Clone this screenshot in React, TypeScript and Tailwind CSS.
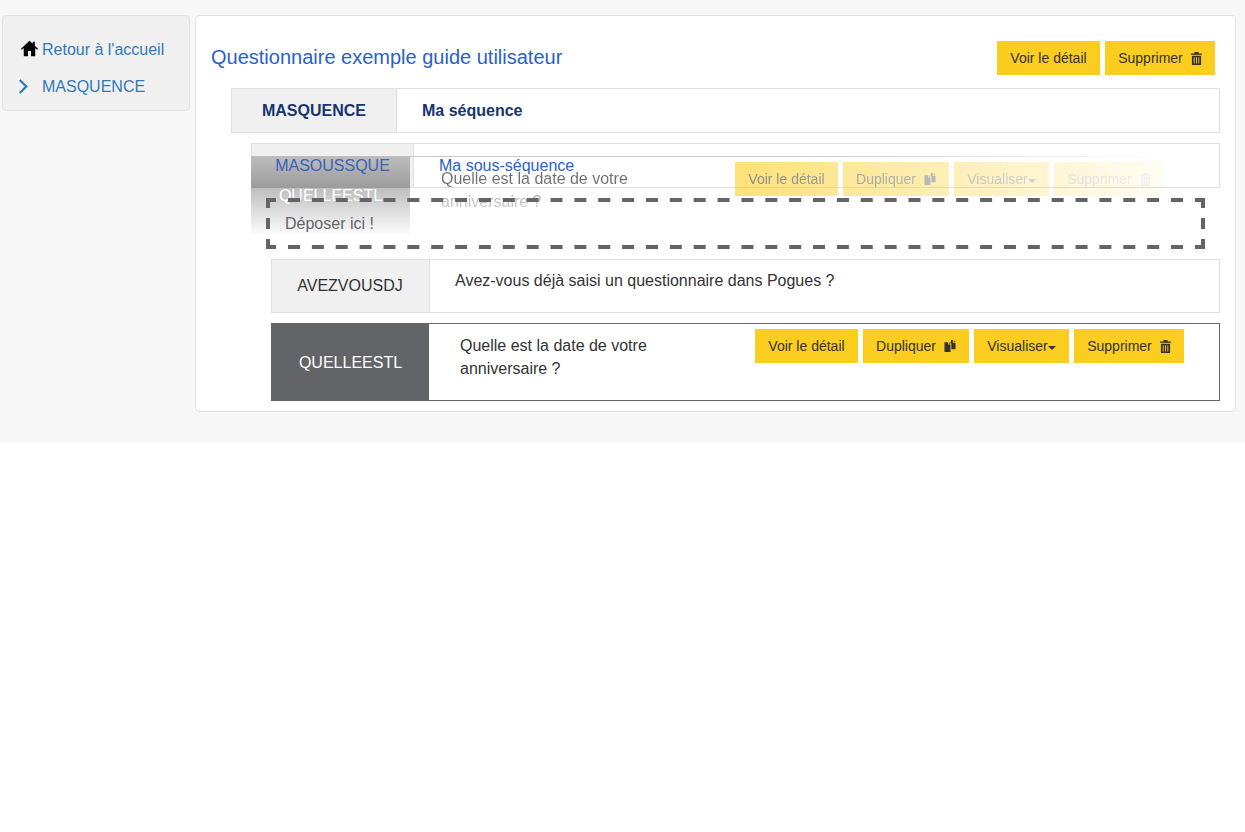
import type { ReactNode } from "react";

function HomeIcon() {
  return (
    <svg viewBox="0 0 16 16" className="h-[17px] w-[17px] shrink-0 fill-black" aria-hidden="true">
      <path d="M8 .6 0 8.300l.8.900L2.600 7.600V15.400h4V10.400h2.800v5h4V7.600l1.800 1.600.8-.9-3-2.800V1.600h-2v2L8 .6Z" />
    </svg>
  );
}

function ChevronIcon() {
  return (
    <svg viewBox="0 0 10 16" className="h-[15px] w-[10px] shrink-0 fill-none stroke-[#337ab7] stroke-[2.4]" aria-hidden="true">
      <path d="M1.500 1 8.500 8l-7 7" />
    </svg>
  );
}

function TrashIcon() {
  return (
    <svg viewBox="0 0 12 14" className="h-[13px] w-[11px] shrink-0 fill-current" aria-hidden="true">
      <path d="M4 0h4l.6 1.500H12V3H0V1.500h3.400L4 0ZM1 4h10v10H1V4Zm2 1.500v7h1v-7H3Zm2.500 0v7h1v-7h-1Zm2.500 0v7h1v-7H8Z" />
    </svg>
  );
}

function CopyIcon() {
  return (
    <svg viewBox="0 0 12 13" className="h-[12px] w-[12px] shrink-0 fill-current" aria-hidden="true">
      <path d="M0 2.500h4v2.500h2.500V13H0V2.500Zm5 0L6.500 4H5V2.500ZM7 0h2v3h3v7H7.500V4L6 2.500h1V0Zm3 .2L12 2h-2V.2Z" />
    </svg>
  );
}

function Caret() {
  return <span className="mt-[3px] h-0 w-0 border-x-4 border-t-4 border-x-transparent border-t-current" />;
}

function ActionButton({ width, children }: { width: string; children: ReactNode }) {
  return (
    <button
      type="button"
      className={`flex h-[34px] items-center justify-center whitespace-nowrap bg-[#fbcd1f] text-sm text-[#333] ${width}`}
    >
      {children}
    </button>
  );
}

function RowActions() {
  return (
    <div className="flex gap-[5px]">
      <ActionButton width="w-[103px]">Voir le détail</ActionButton>
      <ActionButton width="w-[106px]">
        Dupliquer
        <span className="ml-2">
          <CopyIcon />
        </span>
      </ActionButton>
      <ActionButton width="w-[95px]">
        Visualiser
        <Caret />
      </ActionButton>
      <ActionButton width="w-[110px]">
        Supprimer
        <span className="ml-2">
          <TrashIcon />
        </span>
      </ActionButton>
    </div>
  );
}

function SelectedRow() {
  return (
    <div className="flex h-[78px] border border-[#636468] bg-white">
      <div className="flex w-[157px] shrink-0 items-center justify-center bg-[#636468] pt-[2px] text-white">
        QUELLEESTL
      </div>
      <div className="flex flex-1">
        <p className="mt-[10px] ml-[31px] w-[240px] leading-[23px] text-[#333]">
          Quelle est la date de votre anniversaire ?
        </p>
        <div className="mt-[5px] ml-[55px]">
          <RowActions />
        </div>
      </div>
    </div>
  );
}

// what the browser shows while a row is dragged: same row, washed out
function DragPreview() {
  return (
    <div className="pointer-events-none absolute top-[13px] left-0 z-10 flex h-[78px] w-[949px]">
      <div className="flex w-[159px] shrink-0 items-center justify-center bg-[linear-gradient(to_bottom,#bdbdbd_0px,#9b9b9b_32px,#bebebe_32px,#fbfbfb_78px)] pt-[2px] text-white">
        QUELLEESTL
      </div>
      <div className="relative flex-1">
        <div className="h-px w-[755px] bg-[linear-gradient(to_right,#c8c8c8_50%,transparent)]" />
        <p className="mt-[10px] ml-[31px] w-[240px] bg-[linear-gradient(to_bottom,#6f6f6f_40%,#c4c4c4_75%)] bg-clip-text leading-[23px] text-transparent">
          Quelle est la date de votre anniversaire ?
        </p>
        <div className="absolute top-[6px] left-[325px] opacity-60 [mask-image:linear-gradient(to_right,black_0%,rgba(0,0,0,0.08)_100%)]">
          <RowActions />
        </div>
      </div>
    </div>
  );
}

function DropOutline() {
  return (
    <svg viewBox="0 0 939 51" className="pointer-events-none absolute inset-0 h-[51px] w-[939px]" aria-hidden="true">
      <path
        d="M0 0H10V4H4V10H0ZM939 0V10H935V4H929V0ZM0 51V41H4V47H10V51ZM939 51H929V47H935V41H939ZM0 20H4V31H0ZM935 20H939V31H935Z"
        fill="#636468"
      />
      <line x1="22" y1="2" x2="917" y2="2" stroke="#636468" strokeWidth="4" strokeDasharray="12 11.865" />
      <line x1="22" y1="49" x2="917" y2="49" stroke="#636468" strokeWidth="4" strokeDasharray="12 11.865" />
    </svg>
  );
}

export default function App() {
  return (
    <div className="font-['Liberation_Sans',Arial,sans-serif] text-base text-[#333]">
      <div className="flex h-[443px] items-start gap-[5px] bg-[#f7f7f7] pt-[15px] pl-[2px]">
        <aside className="h-[96px] w-[188px] rounded border border-[#e3e3e3] bg-[#f0f0f0] pt-[23px] pl-[15px] text-[#337ab7]">
          <div className="flex h-5 items-center gap-[4px] pl-[3px]">
            <span className="-mt-[2px]">
              <HomeIcon />
            </span>
            <span className="pt-px">Retour à l'accueil</span>
          </div>
          <div className="mt-[17px] flex h-5 items-center gap-[14px]">
            <ChevronIcon />
            <span className="pt-px">MASQUENCE</span>
          </div>
        </aside>

        <main className="h-[397px] w-[1041px] rounded border border-[#e3e3e3] bg-white pt-[25px] pr-[15px] pl-[14px]">
          <div className="mr-[5px] flex h-[34px] items-center justify-between">
            <h1 className="ml-px pb-[2px] text-xl text-[#2a61c8]">Questionnaire exemple guide utilisateur</h1>
            <div className="flex gap-[5px]">
              <ActionButton width="w-[103px]">Voir le détail</ActionButton>
              <ActionButton width="w-[110px]">
                Supprimer
                <span className="ml-2">
                  <TrashIcon />
                </span>
              </ActionButton>
            </div>
          </div>

          <div className="mt-[13px] ml-[21px] flex h-[45px] border border-[#e0e0e0]">
            <div className="flex w-[165px] items-center justify-center border-r border-[#e0e0e0] bg-[#f0f0f0] font-bold text-[#17356f]">
              MASQUENCE
            </div>
            <div className="flex items-center pl-[25px] font-bold text-[#17356f]">Ma séquence</div>
          </div>

          <div className="relative mt-[10px] ml-[41px]">
            <div className="flex h-[45px] border border-[#e0e0e0]">
              <div className="flex w-[162px] items-center justify-center border-r border-[#e0e0e0] bg-[#f0f0f0] text-[#3a62b8]">
                <span className="relative z-20">MASOUSSQUE</span>
              </div>
              <div className="flex items-center pl-[25px] text-[#2a61c8]">
                <span className="relative z-20">Ma sous-séquence</span>
              </div>
            </div>

            <DragPreview />

            <div className="relative z-20 mt-[10px] ml-[15px] flex h-[51px] w-[939px] items-center pl-[19px] text-[#636468]">
              <DropOutline />
              Déposer ici !
            </div>

            <div className="mt-[10px] ml-[20px] flex h-[54px] border border-[#e0e0e0]">
              <div className="flex w-[158px] items-center justify-center border-r border-[#e0e0e0] bg-[#f0f0f0] pr-px">
                AVEZVOUSDJ
              </div>
              <p className="mt-[9px] ml-[25px]">Avez-vous déjà saisi un questionnaire dans Pogues ?</p>
            </div>

            <div className="mt-[10px] ml-[20px]">
              <SelectedRow />
            </div>
          </div>
        </main>
      </div>
    </div>
  );
}
